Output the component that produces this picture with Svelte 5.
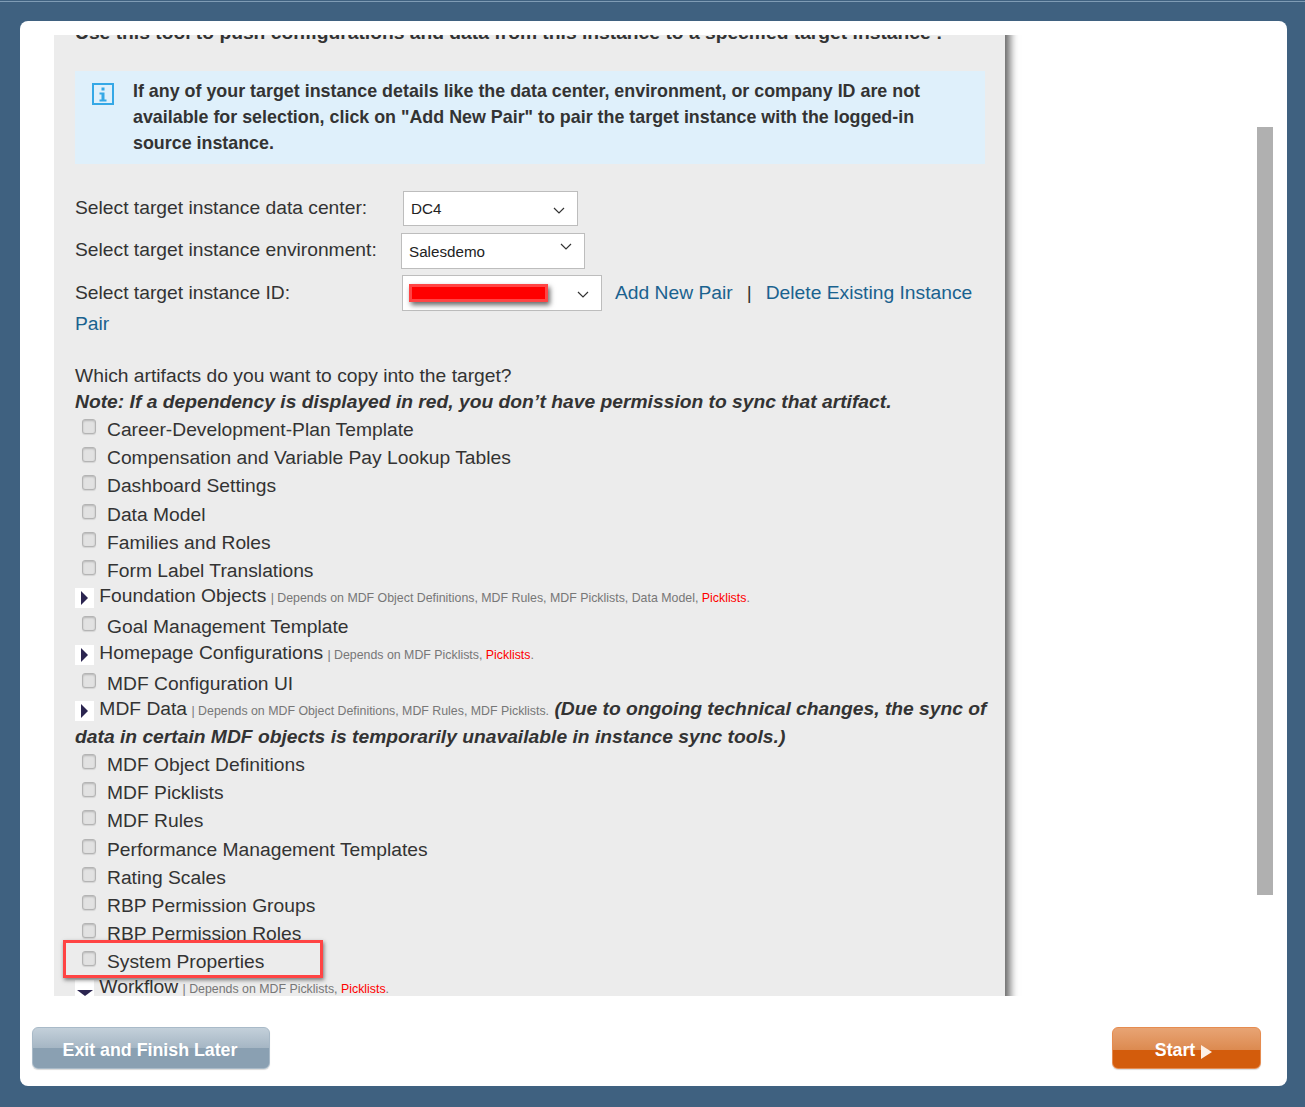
<script>
  const before = [
    'Career-Development-Plan Template',
    'Compensation and Variable Pay Lookup Tables',
    'Dashboard Settings',
    'Data Model',
    'Families and Roles',
    'Form Label Translations'
  ]
  const after = [
    'MDF Object Definitions',
    'MDF Picklists',
    'MDF Rules',
    'Performance Management Templates',
    'Rating Scales',
    'RBP Permission Groups',
    'RBP Permission Roles',
    'System Properties'
  ]
</script>

{#snippet check(label)}
  <div class="row">
    <span class="box"></span>
    <span>{label}</span>
  </div>
{/snippet}

{#snippet expander(label, deps, red, open = false)}
  <div class="row exp">
    <span class="toggle"><span class:right={!open} class:down={open}></span></span>
    <span class="exp-name">{label}</span>
    <span class="deps"> | Depends on {deps}{#if red}, <span class="red">{red}</span>{/if}.</span>
  </div>
{/snippet}

<div class="topline"></div>
<div class="card">
  <div class="scroller">
    <div class="panel">
      <p class="intro">Use this tool to push configurations and data from this instance to a specified target instance :</p>

      <div class="info">
        <svg class="info-icon" width="22" height="22" viewBox="0 0 22 22">
          <rect x="1" y="1" width="20" height="20" fill="none" stroke="#35a8e6" stroke-width="2" />
          <rect x="9.5" y="4.5" width="3" height="3" fill="#35a8e6" />
          <path d="M7.5 9.5h5v7h2v2h-7v-2h2v-5h-2z" fill="#35a8e6" />
        </svg>
        <div>If any of your target instance details like the data center, environment, or company ID are not available for selection, click on "Add New Pair" to pair the target instance with the logged-in source instance.</div>
      </div>

      <div class="field f1">
        <span class="flabel">Select target instance data center:</span>
        <div class="select s1">DC4
          <svg class="chev" width="12" height="7" viewBox="0 0 12 7"><path d="M1 1l5 5 5-5" fill="none" stroke="#333" stroke-width="1.2" /></svg>
        </div>
      </div>
      <div class="field f2">
        <span class="flabel">Select target instance environment:</span>
        <div class="select s2">Salesdemo
          <svg class="chev up" width="12" height="7" viewBox="0 0 12 7"><path d="M1 1l5 5 5-5" fill="none" stroke="#333" stroke-width="1.2" /></svg>
        </div>
      </div>
      <div class="field f3">
        <span class="flabel">Select target instance ID:</span>
        <div class="select s3">
          <span class="redact"></span>
          <svg class="chev" width="12" height="7" viewBox="0 0 12 7"><path d="M1 1l5 5 5-5" fill="none" stroke="#333" stroke-width="1.2" /></svg>
        </div>
        <span class="links"><a href="#add">Add New Pair</a><span class="sep">|</span><a href="#del">Delete Existing Instance</a></span>
      </div>
      <div class="pair"><a href="#del">Pair</a></div>

      <div class="question">Which artifacts do you want to copy into the target?</div>
      <div class="note">Note: If a dependency is displayed in red, you don’t have permission to sync that artifact.</div>

      <div class="list">
        {#each before as label}
          {@render check(label)}
        {/each}
        {@render expander('Foundation Objects', 'MDF Object Definitions, MDF Rules, MDF Picklists, Data Model', 'Picklists')}
        {@render check('Goal Management Template')}
        {@render expander('Homepage Configurations', 'MDF Picklists', 'Picklists')}
        {@render check('MDF Configuration UI')}
        <div class="mdf-data">
          <span class="toggle"><span class="right"></span></span>
          <span class="exp-name">MDF Data</span>
          <span class="deps"> | Depends on MDF Object Definitions, MDF Rules, MDF Picklists.</span>
          <b><i>(Due to ongoing technical changes, the sync of data in certain MDF objects is temporarily unavailable in instance sync tools.)</i></b>
        </div>
        {#each after as label}
          {@render check(label)}
        {/each}
        {@render expander('Workflow', 'MDF Picklists', 'Picklists', true)}
      </div>
    </div>
    <div class="highlight"></div>
    <div class="scrollbar"></div>
  </div>

  <div class="footer">
    <button class="btn exit">Exit and Finish Later</button>
    <button class="btn start">Start <span class="play"></span></button>
  </div>
</div>

<style>
  :global(body) {
    background: #3f6180;
    font-family: 'Liberation Sans', Arial, sans-serif;
    color: #333;
  }
  .topline { height: 1px; margin-top: 1px; background: #7f9cb5; }
  .card {
    margin: 19px 18px 0 20px;
    height: 1065px;
    background: #fff;
    border-radius: 8px;
    display: flex;
    flex-direction: column;
  }
  .scroller {
    position: relative;
    margin-top: 14px;
    height: 961px;
    overflow: hidden;
  }
  .panel {
    margin-left: 34px;
    width: 910px;
    padding: 0 20px 0 21px;
    height: 1100px;
    background: #ececec;
    box-shadow: 5px 0 8px rgba(0, 0, 0, 0.6);
    clip-path: inset(0 -20px 0 0);
    font-size: 19.25px;
    box-sizing: content-box;
  }
  .intro {
    margin: -12px 0 0;
    font-weight: bold;
    line-height: 20px;
    white-space: nowrap;
    color: #333;
  }
  .info {
    margin-top: 28px;
    height: 93px;
    box-sizing: border-box;
    padding: 7px 20px 0 58px;
    background: #dff0fb;
    font-size: 17.86px;
    font-weight: bold;
    line-height: 26px;
    position: relative;
  }
  .info-icon { position: absolute; left: 17px; top: 12px; }
  .field { display: flex; align-items: center; }
  .f1 { margin-top: 27px; height: 35px; }
  .f2 { margin-top: 7px; height: 36px; }
  .f3 { margin-top: 6px; height: 36px; }
  .flabel { width: 328px; flex: none; position: relative; top: -1px; }
  .f3 .flabel { top: 0; }
  .select {
    position: relative;
    box-sizing: border-box;
    background: #fff;
    border: 1px solid #bdbdbd;
    font-size: 15.2px;
    color: #222;
    padding-left: 7px;
    display: flex;
    align-items: center;
    height: 100%;
  }
  .s1 { width: 175px; }
  .s2 { width: 184px; margin-left: -2px; padding-top: 1px; }
  .s3 { width: 200px; margin-left: -1px; }
  .chev { position: absolute; right: 12px; top: 15px; }
  .chev.up { top: 9px; }
  .redact {
    width: 139px;
    height: 18px;
    box-sizing: border-box;
    background: #f00;
    border: 3px solid #f44;
    box-shadow: 2px 3px 5px rgba(0, 0, 0, 0.6);
    margin-left: -1px;
    margin-top: -1px;
  }
  a { color: #1a628f; text-decoration: none; }
  .links { margin-left: 13px; white-space: nowrap; }
  .sep { margin: 0 14px; }
  .pair { line-height: 26px; margin-top: 0; }
  .question { margin-top: 26px; line-height: 26px; }
  .note { font-weight: bold; font-style: italic; line-height: 26px; white-space: nowrap; }
  .list { margin-top: 0; }
  .row {
    height: 28.2px;
    box-sizing: border-box;
    padding-top: 2px;
    display: flex;
    align-items: center;
    white-space: nowrap;
  }
  .box {
    width: 12px;
    height: 13px;
    margin: -7px 11.5px 0 6.5px;
    flex: none;
    background: #e2e2e2;
    border: 1px solid #b4b4b4;
    border-radius: 3px;
    box-shadow: inset 0 1px 2px rgba(0, 0, 0, 0.2), 0 1px 1px rgba(0, 0, 0, 0.1);
  }
  .exp { display: block; padding-top: 0; line-height: 24px; }
  .toggle {
    display: inline-flex;
    align-items: center;
    justify-content: center;
    width: 19px;
    height: 20px;
    margin: -4px 0 -4px 0;
    background: #fff;
    vertical-align: -3px;
  }
  .right {
    border-left: 7px solid #2b2550;
    border-top: 7px solid transparent;
    border-bottom: 7px solid transparent;
  }
  .down {
    border-top: 6px solid #2b2550;
    border-left: 8px solid transparent;
    border-right: 8px solid transparent;
    margin-top: 6px;
  }
  .exp-name { font-size: 19.25px; }
  .deps { font-size: 12.36px; line-height: 1; color: #777; margin-left: -1px; }
  .red { color: #f00; }
  .mdf-data { margin: -2px -6px -1px 0; line-height: 28px; }
  .highlight {
    position: absolute;
    left: 43px;
    top: 905px;
    width: 260px;
    height: 38px;
    box-sizing: border-box;
    border: 3px solid #f44;
    box-shadow: 1px 2px 4px rgba(0, 0, 0, 0.5);
  }
  .scrollbar {
    position: absolute;
    left: 1237px;
    top: 92px;
    width: 16px;
    height: 768px;
    background: #b0b0b0;
  }
  .footer {
    flex: 1;
    display: flex;
    justify-content: space-between;
    align-items: flex-start;
    padding: 31px 26px 0 12px;
  }
  .btn {
    height: 42px;
    border: none;
    border-radius: 6px;
    color: #fff;
    font: bold 17.8px 'Liberation Sans', Arial, sans-serif;
    padding-top: 6px;
    box-shadow: 0 1px 1px rgba(0, 0, 0, 0.15);
  }
  .exit {
    width: 238px;
    padding-right: 8px;
    background: linear-gradient(#c3d0da 0, #a5b6c4 50%, #8aa0b2 50%, #8aa0b2 100%);
    border: 1px solid #a9bac8;
  }
  .start {
    width: 149px;
    padding-right: 12px;
    background: linear-gradient(#e8a474 0, #dc8a50 55%, #d35c0c 55%, #d35c0c 100%);
    border: 1px solid #e68c50;
  }
  .play {
    display: inline-block;
    margin-left: 1px;
    border-left: 11px solid #fdf0e6;
    border-top: 7px solid transparent;
    border-bottom: 7px solid transparent;
    vertical-align: -3px;
  }
</style>
